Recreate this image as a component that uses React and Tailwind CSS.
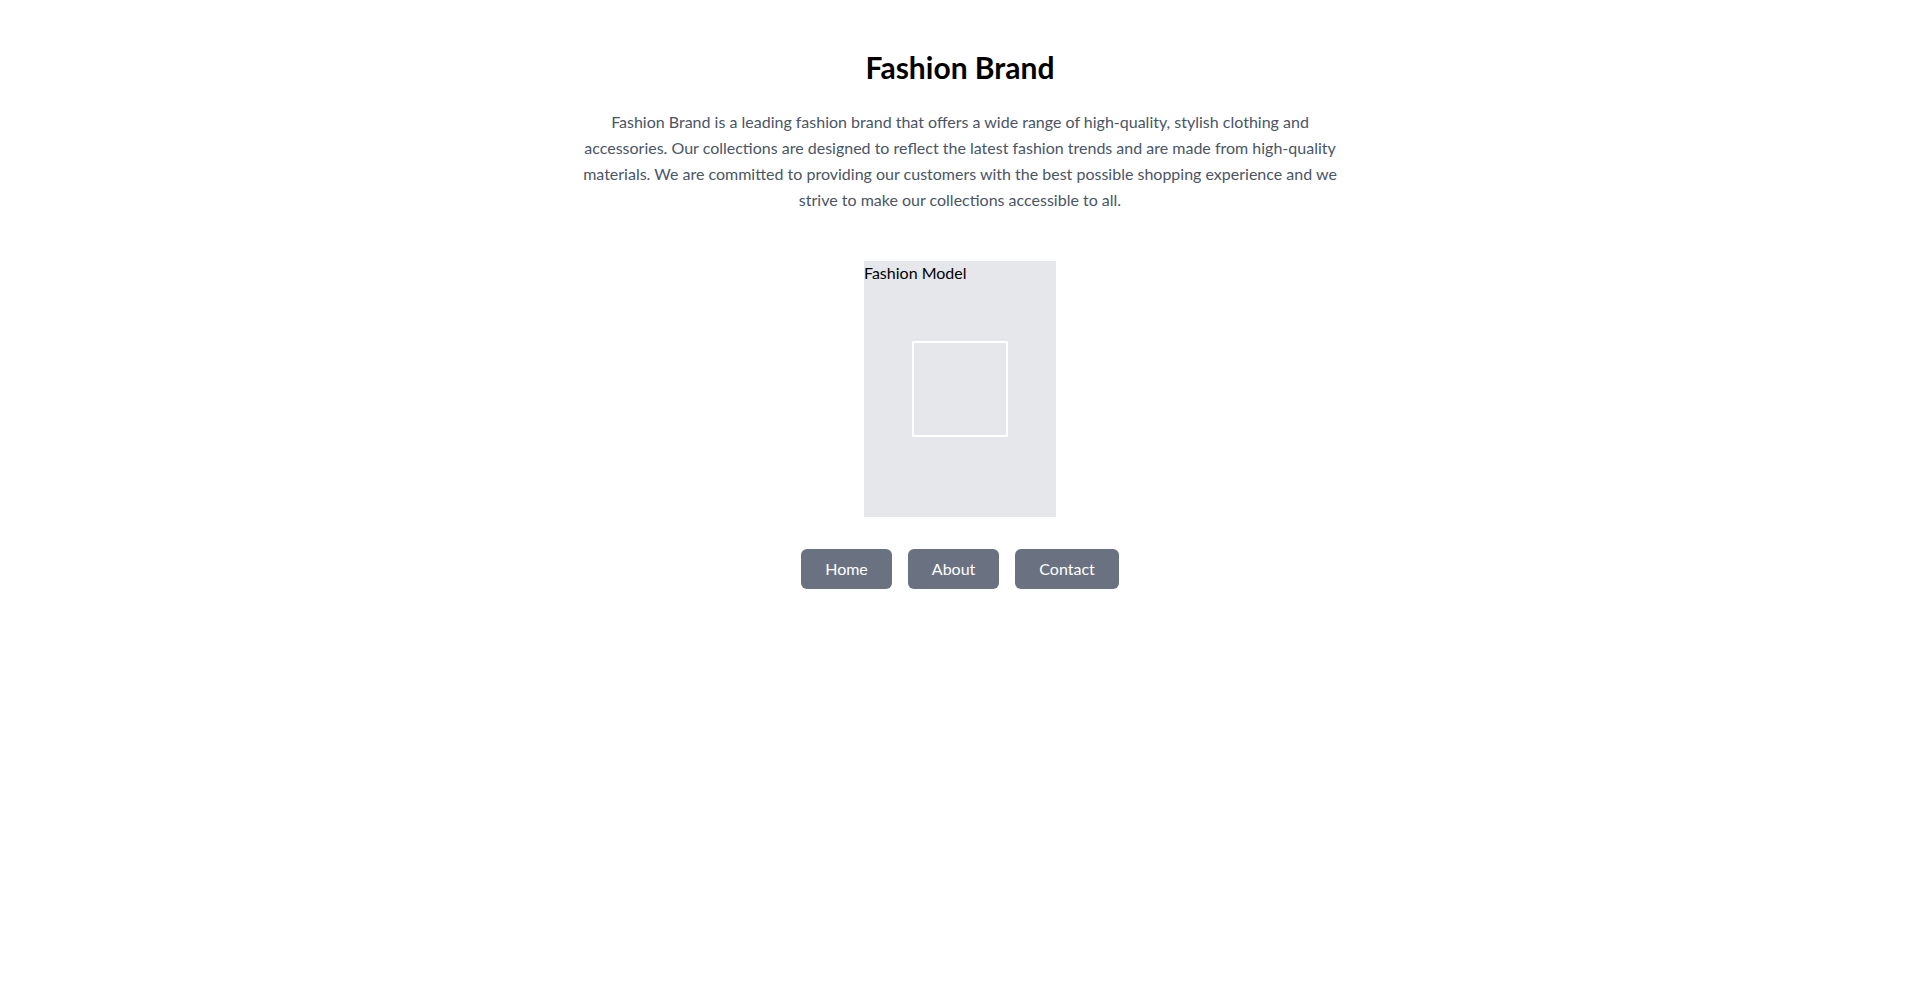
export default function App() {
  return (
    <div className="min-h-screen bg-white font-['Lato',sans-serif] flex flex-col items-center pt-12">
      <h1 className="text-3xl font-bold text-black mb-6 mt-px">Fashion Brand</h1>
      <p className="max-w-3xl text-center text-gray-600 leading-relaxed">
        Fashion Brand is a leading fashion brand that offers a wide range of high-quality, stylish clothing and
        accessories. Our collections are designed to reflect the latest fashion trends and are made from high-quality
        materials. We are committed to providing our customers with the best possible shopping experience and we
        strive to make our collections accessible to all.
      </p>
      <div className="relative mt-12 w-48 h-64 bg-gray-200 text-black">
        <span>Fashion Model</span>
        <div className="absolute left-12 top-20 w-24 h-24 border-2 border-white"></div>
      </div>
      <div className="flex gap-4 mt-8">
        <button className="bg-gray-500 text-white px-6 py-2 rounded-md">Home</button>
        <button className="bg-gray-500 text-white px-6 py-2 rounded-md">About</button>
        <button className="bg-gray-500 text-white px-6 py-2 rounded-md">Contact</button>
      </div>
    </div>
  )
}
